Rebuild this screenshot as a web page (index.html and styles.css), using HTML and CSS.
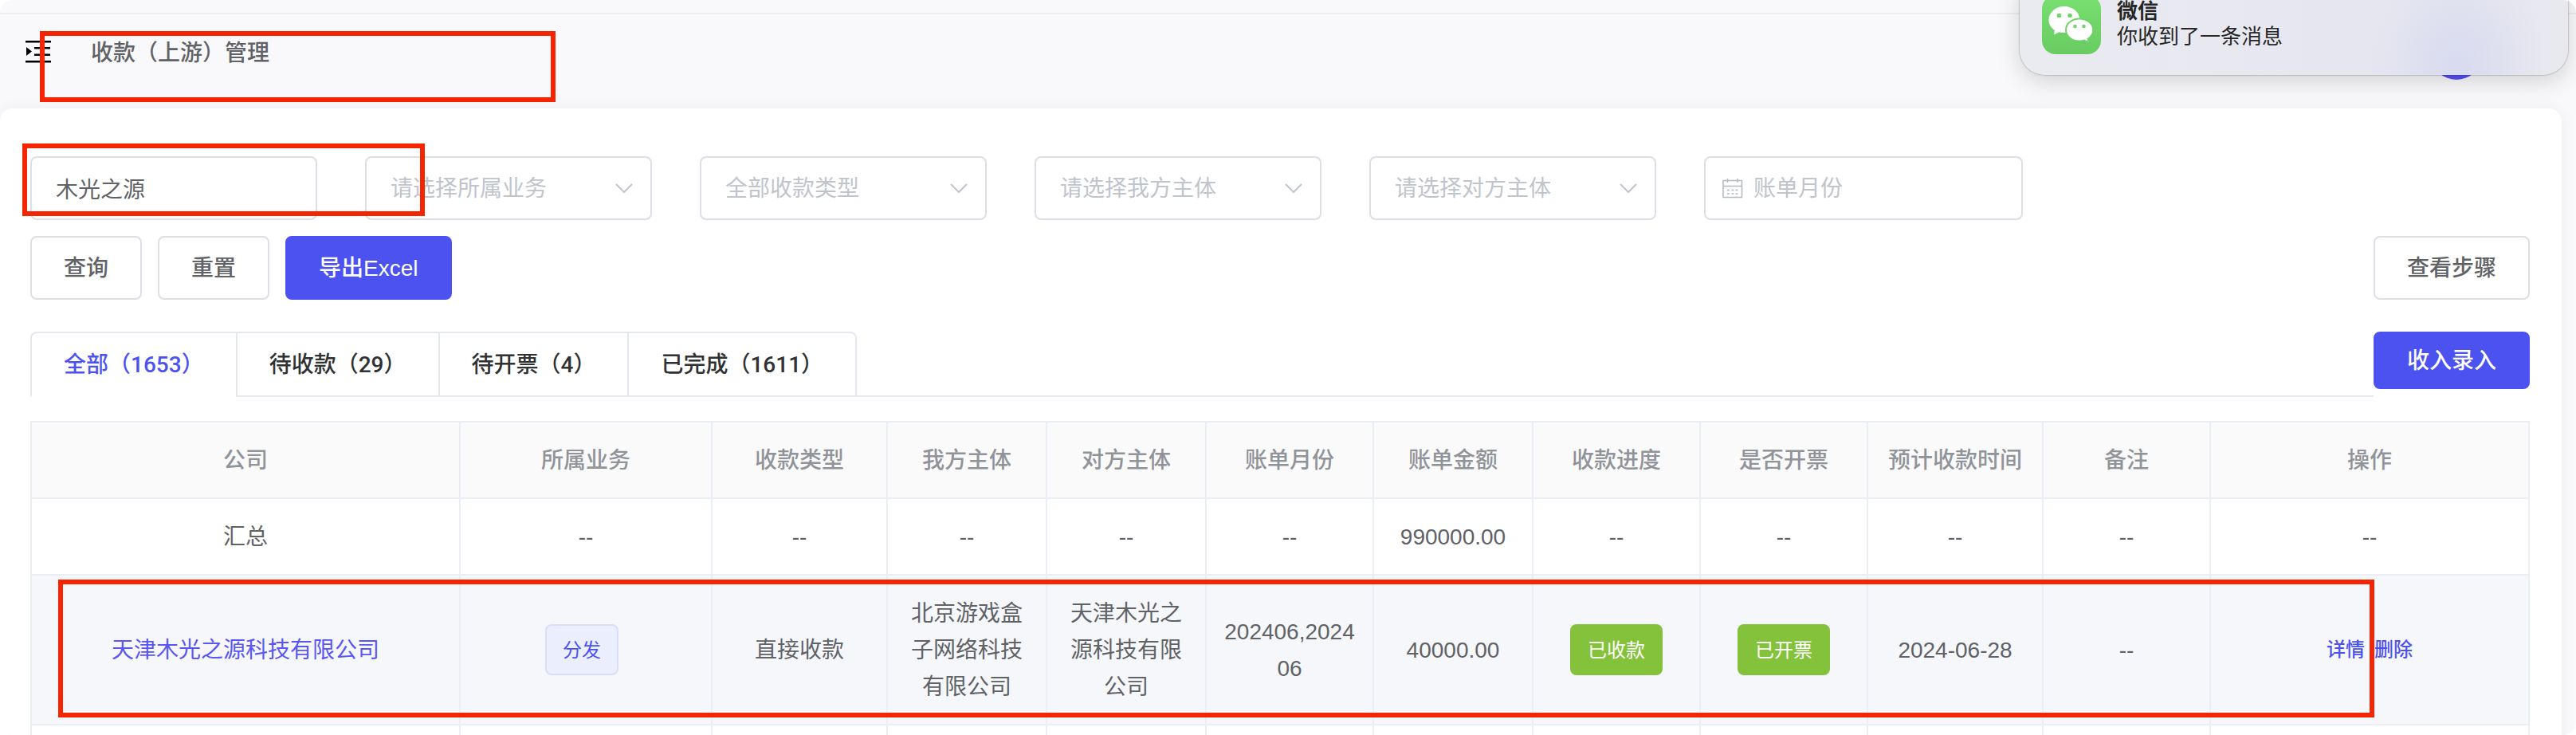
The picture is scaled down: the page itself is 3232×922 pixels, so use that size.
FILE: index.html
```html
<!DOCTYPE html>
<html lang="zh-CN">
<head>
<meta charset="utf-8">
<title>收款（上游）管理</title>
<link rel="stylesheet" href="styles.css">
</head>
<body>
<div class="app">
  <div class="tabstrip"></div>
  <header class="topbar">
    <button class="fold" type="button" aria-label="展开菜单">
      <svg width="32" height="28" viewBox="0 0 32 28"><path d="M0 0h32v2.500H0zM11 8h20v2.500H11zM11 16.500h20V19H11zM0 25h32v2.500H0zM1 8l7 5.500L1 19z" fill="#000"/></svg>
    </button>
    <h1 class="title">收款（上游）管理</h1>
    <span class="avatar"></span>
  </header>
  <main class="card">
    <form class="filters">
      <input class="field" type="text" value="木光之源" aria-label="公司名称">
      <select class="field" aria-label="所属业务"><option>请选择所属业务</option></select>
      <select class="field" aria-label="收款类型"><option>全部收款类型</option></select>
      <select class="field" aria-label="我方主体"><option>请选择我方主体</option></select>
      <select class="field" aria-label="对方主体"><option>请选择对方主体</option></select>
      <label class="field date">
        <svg width="28" height="28" viewBox="0 0 28 28" fill="none" stroke="#b4b8c0" stroke-width="1.500"><path d="M2 4.500h23.500v21H2zM2 11.500h23.500M7.500 2v5M20 2v5M7 16.500h3M12.500 16.500h3M17.500 16.500h3M7 21h3M12.500 21h3M17.500 21h3"/></svg>
        <input type="text" placeholder="账单月份" aria-label="账单月份">
      </label>
    </form>
    <div class="actions">
      <button class="btn" type="button">查询</button>
      <button class="btn" type="button">重置</button>
      <button class="btn primary" type="button">导出Excel</button>
      <button class="btn push" type="button">查看步骤</button>
    </div>
    <div class="tabrow">
      <div class="tabs" role="tablist">
        <button class="tab active" role="tab" aria-selected="true" type="button">全部（1653）</button>
        <button class="tab" role="tab" type="button">待收款（29）</button>
        <button class="tab" role="tab" type="button">待开票（4）</button>
        <button class="tab" role="tab" type="button">已完成（1611）</button>
      </div>
      <button class="btn primary short" type="button">收入录入</button>
    </div>
    <table class="grid">
      <colgroup>
        <col><col class="w316"><col class="w220"><col class="w200"><col class="w200"><col class="w210"><col class="w200"><col class="w210"><col class="w210"><col class="w220"><col class="w210"><col class="w400">
      </colgroup>
      <thead>
        <tr><th>公司</th><th>所属业务</th><th>收款类型</th><th>我方主体</th><th>对方主体</th><th>账单月份</th><th>账单金额</th><th>收款进度</th><th>是否开票</th><th>预计收款时间</th><th>备注</th><th>操作</th></tr>
      </thead>
      <tbody>
        <tr><td>汇总</td><td>--</td><td>--</td><td>--</td><td>--</td><td>--</td><td>990000.00</td><td>--</td><td>--</td><td>--</td><td>--</td><td>--</td></tr>
        <tr class="hover">
          <td><a class="company" href="#">天津木光之源科技有限公司</a></td>
          <td class="tagcell"><span class="tag">分发</span></td>
          <td>直接收款</td>
          <td>北京游戏盒子网络科技有限公司</td>
          <td>天津木光之源科技有限公司</td>
          <td>202406,202406</td>
          <td>40000.00</td>
          <td class="tagcell"><span class="tag done">已收款</span></td>
          <td class="tagcell"><span class="tag done">已开票</span></td>
          <td>2024-06-28</td>
          <td>--</td>
          <td class="tagcell"><div class="ops"><a href="#">详情</a><a href="#">删除</a></div></td>
        </tr>
        <tr><td></td><td></td><td></td><td></td><td></td><td></td><td></td><td></td><td></td><td></td><td></td><td></td></tr>
      </tbody>
    </table>
  </main>
  <aside class="toast">
    <svg class="toast-icon" width="74" height="74" viewBox="0 0 74 74">
      <defs><linearGradient id="g" x1="0" y1="0" x2="0" y2="1"><stop offset="0" stop-color="#78e070"/><stop offset="1" stop-color="#69cb62"/></linearGradient></defs>
      <rect width="74" height="74" rx="17" fill="url(#g)"/>
      <path d="M28 14C17 14 8.500 21.500 8.500 31c0 5.500 3 10 7.300 13L15 49.500l6.500-3.300c2 .6 4.300.9 6.500.9 11 0 19.500-7 19.500-16.100S39 14 28 14z" fill="#fff"/>
      <path d="M47 29.500c-9.500 0-17 6.200-17 14S37.500 57.500 47 57.500c2.200 0 4.300-.3 6.200-1l5.600 2.800-1-4.700c4-2.600 6.400-6.500 6.400-11.100 0-7.800-7.700-14-17.200-14z" fill="#fff" stroke="#6fd368" stroke-width="2"/>
      <g fill="#70d569"><circle cx="21.500" cy="25.500" r="2.800"/><circle cx="35" cy="25.500" r="2.800"/><circle cx="41.500" cy="39" r="2.300"/><circle cx="52.500" cy="39" r="2.300"/></g>
    </svg>
    <div class="toast-text"><strong>微信</strong><span>你收到了一条消息</span></div>
  </aside>
  <div class="mark mark-title"></div>
  <div class="mark mark-search"></div>
  <div class="mark mark-row"></div>
</div>
</body>
</html>
```
FILE: styles.css
```css
* { box-sizing: border-box; }
html { background: #fff; }
body {
  margin: 0;
  font: 28px/46px "Liberation Sans", "Noto Sans CJK SC", sans-serif;
  color: #606266;
}
button, input, select { font: inherit; color: inherit; }
a { text-decoration: none; }

.app {
  position: relative;
  height: 100vh;
  overflow: hidden;
  display: flex;
  flex-direction: column;
  background: #f9f9fb;
  border-radius: 16px;
}
.tabstrip { flex: none; height: 18px; border-bottom: 2px solid #ededf0; }
.topbar {
  flex: none;
  display: flex;
  align-items: flex-start;
  height: 118px;
  padding: 18px 118px 0 32px;
}
.fold { margin-top: 15px; padding: 0; border: 0; background: none; line-height: 0; }
.title { margin: 8px 0 0 50px; font-size: 28px; line-height: 46px; font-weight: 500; }
.avatar { width: 64px; height: 64px; margin-left: auto; border-radius: 50%; background: #5650f5; }

.card {
  flex: 1 0 auto;
  margin-right: 18px;
  padding: 60px 40px 0 38px;
  background: #fff;
  border-radius: 16px 16px 0 0;
  box-shadow: 0 0 20px rgba(0, 0, 0, .05);
}
.filters { display: flex; gap: 60px; }
.field {
  width: 360px;
  height: 80px;
  padding: 0 30px;
  border: 2px solid #dcdfe6;
  border-radius: 8px;
  background: #fff;
}
select.field {
  appearance: none;
  padding-top: 2px;
  color: #c0c4cc;
  background: #fff url("data:image/svg+xml,%3Csvg xmlns='http://www.w3.org/2000/svg' width='24' height='14' fill='none' stroke='%23c0c4cc' stroke-width='2'%3E%3Cpath d='M2 2l10 10L22 2'/%3E%3C/svg%3E") no-repeat right 21px center;
}
.date { display: flex; align-items: center; gap: 12px; width: 400px; padding: 0 20px; }
.date input { flex: 1; min-width: 0; padding: 2px 0 0; border: 0; outline: 0; background: none; }
::placeholder { color: #c0c4cc; opacity: 1; }

.actions { display: flex; gap: 20px; margin-top: 20px; }
.btn {
  height: 80px;
  padding: 2px 40px 0;
  border: 2px solid #dcdfe6;
  border-radius: 8px;
  background: #fff;
  font-weight: 500;
}
.primary { color: #fff; background: #4c52f0; border-color: #4c52f0; }
.short { height: 72px; }
.push { margin-left: auto; }

.tabrow { display: flex; align-items: flex-start; margin-top: 40px; }
.tabs { flex: 1; display: flex; height: 82px; border-bottom: 2px solid #e4e7ed; }
.tab {
  height: 82px;
  padding: 2px 40px 0;
  border: solid #e4e7ed;
  border-width: 2px 0 2px 2px;
  background: #fff;
  color: #303133;
  font-family: Roboto, "Noto Sans CJK SC", sans-serif;
  font-weight: 500;
}
.tab:first-child { border-top-left-radius: 8px; }
.tab:last-child { border-right-width: 2px; border-top-right-radius: 8px; }
.tab.active { color: #4c52f0; border-bottom-color: #fff; }

.grid {
  width: 100%;
  margin-top: 30px;
  table-layout: fixed;
  border-collapse: separate;
  border-spacing: 0;
  border: solid #ebeef5;
  border-width: 2px 0 0 2px;
  text-align: center;
}
.w200 { width: 200px; }
.w210 { width: 210px; }
.w220 { width: 220px; }
.w316 { width: 316px; }
.w400 { width: 400px; }
.grid th, .grid td {
  height: 96px;
  padding: 25px 20px 23px;
  border: solid #ebeef5;
  border-width: 0 2px 2px 0;
  word-break: break-all;
}
.grid th { background: #fafafa; color: #909399; font-weight: 500; }
.grid .tagcell { padding: 24px 20px; }
.hover td { background: #f5f7fa; }
.company { color: #5a55f5; }
.tag {
  display: inline-block;
  height: 64px;
  margin-right: 10px;
  padding: 0 20px;
  border: 2px solid #d8defc;
  border-radius: 8px;
  background: #ebeefd;
  color: #4c52f0;
  font-size: 24px;
  line-height: 62px;
  vertical-align: middle;
}
.tag.done { margin-right: 0; color: #fff; background: #83c23a; border-color: #83c23a; }
.ops { display: flex; justify-content: center; gap: 12px; font-size: 24px; font-weight: 500; }
.ops a { color: #4c52f0; }

.toast {
  position: absolute;
  top: -34px;
  right: 10px;
  width: 688px;
  height: 128px;
  padding: 28px;
  display: flex;
  gap: 20px;
  border-radius: 32px;
  background: radial-gradient(ellipse 110px 130px at 80% 90%, #d8daef, rgba(216, 218, 239, 0)), linear-gradient(90deg, #eaebf0, #e6e6f1 60%, #e8e8ef);
  box-shadow: 0 0 2px rgba(0, 0, 0, .5), 0 8px 30px rgba(0, 0, 0, .16);
  color: #262626;
  font-size: 26px;
  line-height: 32px;
}
.toast-icon { flex: none; }
.toast-text { display: flex; flex-direction: column; padding-top: 4px; }

.mark { position: absolute; border: 6px solid #f42500; }
.mark-title { left: 50px; top: 39px; width: 647px; height: 89px; }
.mark-search { left: 28px; top: 180px; width: 505px; height: 91px; }
.mark-row { left: 73px; right: 253px; top: 727px; height: 173px; }
```
